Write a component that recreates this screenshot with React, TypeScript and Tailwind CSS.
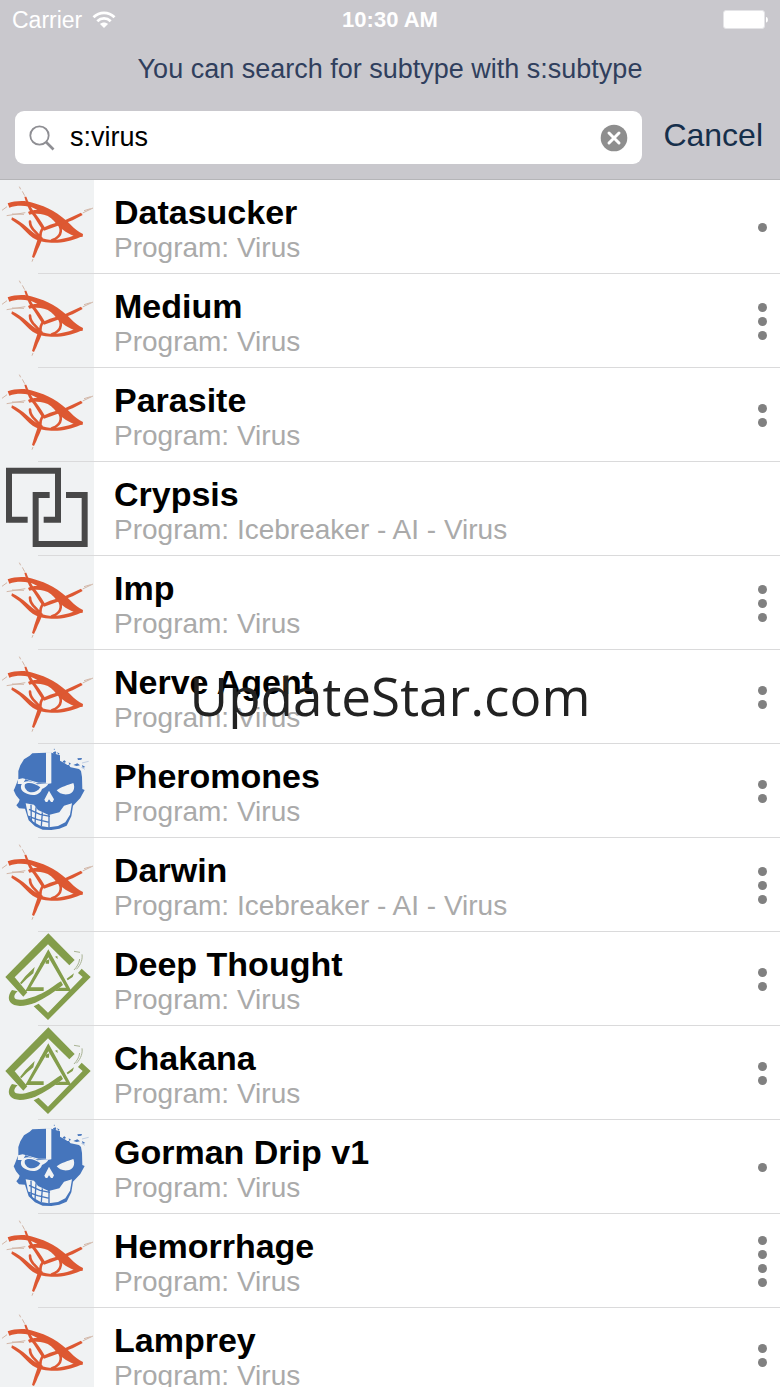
import React, { useState } from "react";

type Faction = "anarch" | "neutral" | "corp" | "shaper";

interface Card {
  name: string;
  type: string;
  faction: Faction;
  copies: number;
}

const cards: Card[] = [
  { name: "Datasucker", type: "Program: Virus", faction: "anarch", copies: 1 },
  { name: "Medium", type: "Program: Virus", faction: "anarch", copies: 3 },
  { name: "Parasite", type: "Program: Virus", faction: "anarch", copies: 2 },
  { name: "Crypsis", type: "Program: Icebreaker - AI - Virus", faction: "neutral", copies: 0 },
  { name: "Imp", type: "Program: Virus", faction: "anarch", copies: 3 },
  { name: "Nerve Agent", type: "Program: Virus", faction: "anarch", copies: 2 },
  { name: "Pheromones", type: "Program: Virus", faction: "corp", copies: 2 },
  { name: "Darwin", type: "Program: Icebreaker - AI - Virus", faction: "anarch", copies: 3 },
  { name: "Deep Thought", type: "Program: Virus", faction: "shaper", copies: 2 },
  { name: "Chakana", type: "Program: Virus", faction: "shaper", copies: 2 },
  { name: "Gorman Drip v1", type: "Program: Virus", faction: "corp", copies: 1 },
  { name: "Hemorrhage", type: "Program: Virus", faction: "anarch", copies: 4 },
  { name: "Lamprey", type: "Program: Virus", faction: "anarch", copies: 2 },
];

function EyeIcon() {
  return (
    <svg viewBox="0 0 282 282" className="size-full" fill="none" aria-hidden="true">
      <g fill="#dd5832">
        <path d="M23 70C45 62 74 60 98 68C120 74 142 82 158 92C178 103 196 118 212 134C222 146 236 155 249 162L248 170L228 171C206 163 186 150 170 133C160 118 148 108 132 104C118 101 106 100 88 104L84 96C92 92 100 90 112 90C104 85 98 82 88 80C66 76 46 77 28 83Z" />
        <path d="M36 112C52 120 68 130 80 141C92 152 106 164 122 172C138 181 160 181 180 178C200 175 216 170 232 163L248 168C226 178 200 187 172 188C146 189 118 186 98 173C84 164 72 148 58 136L34 119Z" />
        <path d="M73 50L79 50C85 66 92 80 100 93C112 108 124 124 134 142L126 147C114 130 104 112 94 100C84 84 78 68 73 50Z" />
        <path d="M243 98L248 105L218 121L178 136L132 152L126 145L150 134L196 120Z" />
        <path d="M114 172L128 172C124 190 114 206 109 220L102 234L96 231L104 204C108 192 112 184 114 172Z" />
      </g>
      <path d="M90 125C90 138 98 148 106 155C112 160 115 164 117 172M130 144C122 151 120 164 122 178M168 120C188 142 190 168 156 181" stroke="#dd5832" strokeWidth="8" strokeLinecap="round" />
      <path d="M58 20L62 28M67 34L74 47M6 91L21 80M20 107L76 98M36 102L72 103M248 99L279 84M252 92L272 86M96 245L99 237" stroke="#d2b7a8" strokeWidth="3" />
    </svg>
  );
}

function SquaresIcon() {
  return (
    <svg viewBox="0 3 282 282" className="size-full" fill="none" aria-hidden="true">
      <path d="M83 176H27V29H174V176H131M149 102H107V249H254V102H198" stroke="#484848" strokeWidth="18" />
    </svg>
  );
}

function SkullIcon() {
  return (
    <svg viewBox="0 3 282 282" className="size-full" aria-hidden="true">
      <path fill="#4575bc" d="M138 29L97 31L89 38L72 49L61 67L55 84L55 108L44 136L41 142L48 157L59 170L56 178L49 187L57 196L75 197L86 232L105 250L128 260L154 261L178 257L200 248L214 220L219 188L241 165L254 141L247 138L246 102L243 84L237 78L212 73L193 60L180 53L180 37L154 29Z" />
      <path fill="#f1f3f4" d="M138 28H154V121C150 123 142 123 136 121H109L76 109L69 123H53L54 109L68 106L87 111L116 119H138Z" />
      <path fill="#f1f3f4" d="M63 128C68 111 96 112 112 124L146 121C142 130 134 134 126 138C120 157 100 159 83 153C69 147 61 141 63 128ZM170 142C182 132 204 126 220 120C226 134 222 150 204 154C188 156 176 150 170 142ZM147 143L133 170L137 177H142L147 169L153 177H158L162 169Z" />
      <path fill="#f1f3f4" d="M77 181L102 185L114 201L146 216L178 208L192 188L216 181L210 215L196 238L174 249L146 253L122 249L100 236L84 216Z" />
      <path fill="#4575bc" d="M75 124C86 116 106 122 121 133C112 149 92 151 82 144C75 138 72 131 75 124Z" />
      <path fill="none" stroke="#4575bc" strokeWidth="4" d="M87 199L120 214L150 220M86 220L113 230L148 238M93 185L94 233M108 193L105 244M127 208L124 249M147 212V254" />
      <path fill="#4575bc" d="M159 28L167 25L169 31L162 36ZM170 28L178 31L177 36ZM188 55L194 52L198 57L192 60ZM206 58L213 62L208 66ZM220 66L232 61L240 67L230 69ZM232 46L246 45L244 50L234 51ZM246 66L256 72L248 74ZM160 18L164 17L165 21ZM195 68L207 65L210 72L201 74Z" />
      <path stroke="#a8bbda" strokeWidth="2" d="M246 60L266 55M244 73L255 79" />
    </svg>
  );
}

function TriangleIcon() {
  return (
    <svg viewBox="0 4 282 282" className="size-full" aria-hidden="true">
      <path fill="#839d4b" d="M145 8L224 88L208 104L144 41L44 140L82 185L70 198L16 139Z" />
      <path fill="#839d4b" d="M245 114L272 139L144 268L101 227L116 219L144 246L248 139L234 127Z" />
      <path fill="#839d4b" fillRule="evenodd" d="M145 56L214 181H164L178 171H198L145 80L92 170H131V181H76Z" />
      <path fill="#839d4b" d="M36 178L53 182C41 192 40 202 49 206C67 212 108 198 133 184C150 176 169 159 183 152L189 163C164 184 135 203 106 216C78 227 42 231 31 215C22 203 28 188 36 178Z" />
      <path fill="#839d4b" d="M60 157L76 137L104 109L100 128L82 143L64 161ZM119 101L133 90L127 99ZM137 90L148 86L147 99L137 99ZM165 78L172 76L173 85ZM200 144L222 128L218 139L203 149Z" />
      <path fill="none" stroke="#a9b394" strokeWidth="3" d="M222 62L240 65M246 71C248 84 244 101 229 116M239 85C237 99 231 108 222 118" />
    </svg>
  );
}

const factionIcons: Record<Faction, () => React.ReactElement> = {
  anarch: EyeIcon,
  neutral: SquaresIcon,
  corp: SkullIcon,
  shaper: TriangleIcon,
};

function StatusBar() {
  return (
    <div className="grid h-10 grid-cols-3 items-center px-3 text-white">
      <div className="flex items-center gap-[10px]">
        <span className="text-[23px] leading-7">Carrier</span>
        <svg viewBox="0 0 24 18" className="h-[18px] w-6" fill="none" aria-label="Wi-Fi">
          <path d="M1.500 6.300C7.500 .3 16.500 .3 22.500 6.300M5.300 10.200C9.200 6.500 14.800 6.500 18.700 10.200" stroke="currentColor" strokeWidth="2.800" />
          <path d="M8 13C10.400 11 13.600 11 16 13L12 17Z" fill="currentColor" />
        </svg>
      </div>
      <span className="text-center text-[22px] leading-7 font-bold">10:30 AM</span>
      <svg viewBox="0 0 46 20" className="h-5 w-[46px] justify-self-end" aria-label="Battery full">
        <rect x="1.500" y=".5" width="41" height="18" rx="2.500" fill="#fff" stroke="#e4e4e7" />
        <path d="M44 7C46.500 7 46.500 12.500 44 12.500Z" fill="#fff" />
      </svg>
    </div>
  );
}

function SearchBar() {
  const [query, setQuery] = useState("s:virus");
  return (
    <form role="search" className="flex items-center gap-[21px] pr-[17px] pl-[15px]" onSubmit={(e) => e.preventDefault()}>
      <div className="flex h-[53px] min-w-0 flex-1 items-center rounded-[9px] bg-white px-[14px]">
        <label htmlFor="card-search" className="mr-[15px] shrink-0">
          <span className="sr-only">Search cards</span>
          <svg viewBox="0 0 26 26" className="size-[26px]" fill="none" stroke="#8e8e93" aria-hidden="true">
            <circle cx="10.500" cy="10.500" r="9.200" strokeWidth="1.800" />
            <path d="M17 17L24.500 24.500" strokeWidth="2.600" />
          </svg>
        </label>
        <input
          id="card-search"
          type="text"
          value={query}
          onChange={(e) => setQuery(e.target.value)}
          className="h-full min-w-0 flex-1 bg-transparent text-[27px] text-black outline-none"
        />
        <button type="button" aria-label="Clear search" className="shrink-0" onClick={() => setQuery("")}>
          <svg viewBox="0 0 28 28" className="size-7" aria-hidden="true">
            <circle cx="14" cy="14" r="13.300" fill="#8e8e8e" />
            <path d="M9 9L19 19M19 9L9 19" stroke="#fff" strokeWidth="3" strokeLinecap="round" />
          </svg>
        </button>
      </div>
      <button type="button" className="pb-[6px] text-[32px] leading-9 text-[#162f4b]">
        Cancel
      </button>
    </form>
  );
}

function CardRow({ card }: { card: Card }) {
  const Icon = factionIcons[card.faction];
  return (
    <li className="flex h-[94px]">
      <div className="w-[94px] shrink-0 bg-[#f0f2f3]">
        <Icon />
      </div>
      <div className="relative flex min-w-0 flex-1 items-center border-b border-[#dadadb] pr-[13px] pl-5">
        <div className="min-w-0 flex-1 pt-[6px]">
          <h2 className="text-[34px] leading-9 font-bold text-black">{card.name}</h2>
          <p className="text-[28px] leading-9 text-[#aaaaaa]">{card.type}</p>
        </div>
        <div className="flex flex-col gap-[5px] pt-[2px]" role="img" aria-label={`${card.copies} copies`}>
          {Array.from({ length: card.copies }, (_, i) => (
            <span key={i} className="size-[9px] rounded-full bg-[#808080]" />
          ))}
        </div>
        <span className="absolute -bottom-px right-full h-px w-14 bg-[#dadadb]" />
      </div>
    </li>
  );
}

export default function App() {
  return (
    <div className="relative h-screen overflow-hidden bg-white font-['Liberation_Sans',Arial,sans-serif]">
      <header className="border-b border-[#b5b5b8] bg-[#c9c8cd] pb-[15px]">
        <StatusBar />
        <p className="pt-[13px] pb-[26px] text-center text-[27px] leading-8 text-[#303f5d]">
          You can search for subtype with s:subtype
        </p>
        <SearchBar />
      </header>
      <ul>
        {cards.map((card) => (
          <CardRow key={card.name} card={card} />
        ))}
      </ul>
      <div className="pointer-events-none absolute inset-0 flex items-center justify-center pt-1 font-['Open_Sans',sans-serif] text-[53px] text-[#222222]">
        UpdateStar.com
      </div>
    </div>
  );
}
